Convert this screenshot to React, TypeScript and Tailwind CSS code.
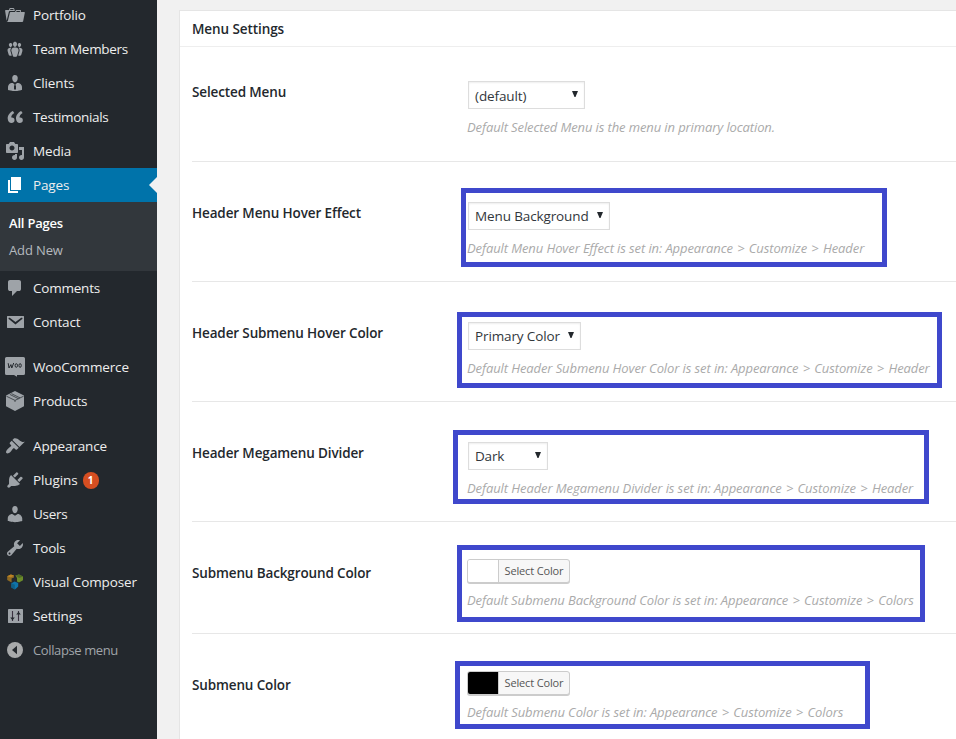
import { Fragment, type ReactNode } from "react";

const glyphs = {
  portfolio:
    "M4 5H.78c-.37 0-.74.32-.69.84l1.56 9.99S3.5 8.47 3.86 6.7c.11-.53.61-.7.98-.7H10s-.7-2.08-.77-2.31C9.11 3.25 8.89 3 8.45 3H5.14c-.36 0-.7.23-.8.64C4.25 4.04 4 5 4 5zm4.88 0h-4s.42-1 .87-1h2.13c.48 0 1 1 1 1zM2.67 16.25c-.31.47-.76.75-1.26.75h15.73c.54 0 .92-.31 1.03-.83.44-2.19 1.68-8.44 1.68-8.44.07-.5-.3-.73-.62-.73H16V5.53c0-.16-.26-.53-.66-.53h-3.76c-.52 0-.87.58-.87.58L10 7H5.59c-.32 0-.63.19-.69.5 0 0-1.59 6.7-1.72 7.33-.07.37-.22.99-.51 1.42zM15.38 7H11s.58-1 1.13-1h2.29c.71 0 .96 1 .96 1z",
  groups:
    "M8.03 4.46c-.29 1.28.55 3.46 1.97 3.46 1.41 0 2.25-2.18 1.96-3.46-.22-.98-1.08-1.63-1.96-1.63-.89 0-1.74.65-1.97 1.63zm-4.13.9c-.25 1.08.47 2.93 1.67 2.93s1.92-1.85 1.67-2.93c-.19-.83-.92-1.39-1.67-1.39s-1.48.56-1.67 1.39zm8.86 0c-.25 1.08.47 2.93 1.66 2.93 1.2 0 1.92-1.85 1.67-2.93-.19-.83-.92-1.39-1.67-1.39-.74 0-1.47.56-1.66 1.39zm-.59 11.43l1.25-4.3C14.2 10 12.71 8.47 10 8.47c-2.72 0-4.21 1.53-3.44 4.02l1.26 4.3C8.05 17.51 9 18 10 18c.98 0 1.94-.49 2.17-1.21zm-6.1-7.63c-.49.67-.96 1.83-.42 3.59l1.12 3.79c-.34.2-.77.31-1.2.31-.85 0-1.65-.41-1.85-1.03l-1.07-3.65c-.65-2.11.61-3.4 2.92-3.4.27 0 .54.02.79.06-.1.1-.2.22-.29.33zm8.35-.39c2.31 0 3.58 1.29 2.92 3.4l-1.07 3.65c-.2.62-1 1.03-1.85 1.03-.43 0-.86-.11-1.2-.31l1.11-3.77c.55-1.78.08-2.94-.42-3.61-.08-.11-.18-.23-.28-.33.25-.04.51-.06.79-.06z",
  businessman:
    "M7.3 6l-.03-.19c-.04-.37-.05-.73-.03-1.08.02-.36.1-.71.25-1.04.14-.32.31-.61.52-.86s.49-.46.83-.6c.34-.15.72-.23 1.13-.23.69 0 1.26.2 1.71.59s.76.87.91 1.44.18 1.16.09 1.78l-.03.19c-.01.09-.05.25-.11.48-.05.24-.12.47-.2.69-.08.21-.19.45-.34.72-.14.27-.3.49-.47.69-.18.19-.4.34-.67.48-.27.13-.55.19-.86.19s-.59-.06-.87-.19c-.26-.13-.49-.29-.67-.5-.18-.2-.34-.42-.49-.66-.15-.25-.26-.49-.34-.73-.09-.25-.16-.47-.21-.67-.06-.21-.1-.37-.12-.5zm9.2 6.24c.41.7.5 1.41.5 2.14v2.49c0 .03-.12.08-.29.13-.18.04-.42.13-.97.27-.55.12-1.1.24-1.65.34s-1.19.19-1.95.27c-.75.08-1.46.12-2.13.12-.68 0-1.39-.04-2.14-.12-.75-.07-1.4-.17-1.98-.27-.58-.11-1.08-.23-1.56-.34-.49-.11-.8-.21-1.06-.29L3 16.87v-2.49c0-.75.07-1.46.46-2.15s.81-1.25 1.5-1.68C5.66 10.12 7.19 10 8 10l1.67 1.67L9 13v3l1.02 1.08L11 16v-3l-.68-1.33L11.97 10c.77 0 2.2.07 2.9.52.71.45 1.21 1.02 1.63 1.72z",
  media:
    "M13 11V4c0-.55-.45-1-1-1h-1.67L9 1H5L3.67 3H2c-.55 0-1 .45-1 1v7c0 .55.45 1 1 1h10c.55 0 1-.45 1-1zM7 4.5c1.38 0 2.5 1.12 2.5 2.5S8.38 9.5 7 9.5 4.5 8.38 4.5 7 5.62 4.5 7 4.5zM14 6h5v10.5c0 1.38-1.12 2.5-2.5 2.5S14 17.88 14 16.5s1.12-2.5 2.5-2.5c.17 0 .34.02.5.05V9h-3V6zm-4 8.05V13h2v3.5c0 1.38-1.12 2.5-2.5 2.5S7 17.88 7 16.5 8.12 14 9.5 14c.17 0 .34.02.5.05z",
  page: "M6 15V2h10v13H6zm-1 1h8v2H3V5h2v11z",
  comments:
    "M5 2h9q.82 0 1.41.59T16 4v7q0 .82-.59 1.41T14 13h-2l-5 5v-5H5q-.82 0-1.41-.59T3 11V4q0-.82.59-1.41T5 2z",
  email:
    "M2.4 4h16.2q.4 0 .4.4v11.2q0 .4-.4.4H2.4q-.4 0-.4-.4V4.4Q2 4 2.4 4zm8.09 8.6l6.74-5.53c.24-.2.43-.66.13-1.07-.29-.41-.82-.42-1.17-.17l-5.7 4.2L4.8 5.83c-.35-.25-.88-.24-1.17.17-.3.41-.11.87.13 1.07z",
  appearance:
    "M14.48 11.06L7.41 3.99l1.5-1.5c.5-.56 2.3-.47 3.51.32 1.21.8 1.43 1.28 2.91 2.1 1.18.64 2.45 1.26 4.45.85zm-.71.71L6.7 4.7 4.93 6.47c-.39.39-.39 1.02 0 1.41l1.06 1.06c.39.39.39 1.03 0 1.42-.6.6-1.43 1.11-2.21 1.69-.35.26-.7.53-1.01.84C1.43 14.23.4 16.08 1.4 17.07c.99 1 2.84-.03 4.18-1.36.31-.31.58-.66.85-1.02.57-.78 1.08-1.61 1.69-2.21.39-.39 1.02-.39 1.41 0l1.06 1.06c.39.39 1.02.39 1.41 0z",
  plugins:
    "M13.11 4.36L9.87 7.6 8 5.73l3.24-3.24c.35-.34 1.05-.2 1.56.32.52.51.66 1.21.31 1.55zm-8 1.77l.91-1.12 9.01 9.01-1.19.84c-.71.71-2.63 1.16-3.82 1.16H6.14L4.9 17.26c-.59.59-1.54.59-2.12 0-.59-.58-.59-1.53 0-2.12l1.24-1.24v-3.88c0-1.13.4-3.19 1.09-3.89zm7.26 3.97l3.24-3.24c.34-.35 1.04-.21 1.55.31.52.51.66 1.21.31 1.55l-3.24 3.25z",
  users:
    "M10 9.25c-2.27 0-2.73-3.44-2.73-3.44C7 4.02 7.82 2 9.97 2c2.16 0 2.98 2.02 2.71 3.81 0 0-.41 3.44-2.68 3.44zm0 2.57L12.72 10c2.39 0 4.52 2.33 4.52 4.53v2.49s-3.65 1.13-7.24 1.13c-3.65 0-7.24-1.13-7.24-1.13v-2.49c0-2.25 1.94-4.48 4.47-4.48z",
  tools:
    "M16.68 9.77c-1.34 1.34-3.3 1.67-4.95.99l-5.41 6.52c-.99.99-2.59.99-3.58 0s-.99-2.59 0-3.57l6.52-5.42c-.68-1.65-.35-3.61.99-4.95 1.28-1.28 3.12-1.62 4.72-1.06l-2.89 2.89 2.82 2.82 2.86-2.87c.53 1.58.18 3.39-1.08 4.65zM3.81 16.21c.4.39 1.04.39 1.43 0 .4-.4.4-1.04 0-1.43-.39-.4-1.03-.4-1.43 0-.39.39-.39 1.03 0 1.43z",
};

function Glyph({ name }: { name: keyof typeof glyphs }) {
  return (
    <svg viewBox="0 0 20 20" className="size-5 fill-current">
      <path fillRule="evenodd" d={glyphs[name]} />
    </svg>
  );
}

function QuoteIcon() {
  return (
    <svg viewBox="0 0 20 20" className="size-5 fill-current">
      <path
        transform="translate(2 2.3) scale(.88 .86)"
        d="M8.54 12.74c0-.87-.24-1.61-.72-2.22-.73-.92-2.14-1.03-2.96-.85-.34-1.93 1.3-4.39 3.42-5.45L6.65 1.94C3.45 3.46.31 6.96.85 11.37 1.19 14.16 2.8 16 5.08 16c1 0 1.83-.29 2.48-.88.66-.59.98-1.38.98-2.38zm9.43 0c0-.87-.24-1.61-.72-2.22-.73-.92-2.14-1.03-2.96-.85-.34-1.93 1.3-4.39 3.42-5.45l-1.63-2.28c-3.2 1.52-6.34 5.02-5.8 9.43.34 2.79 1.95 4.63 4.23 4.63 1 0 1.83-.29 2.48-.88.66-.59.98-1.38.98-2.38z"
      />
    </svg>
  );
}

function WooIcon() {
  return (
    <svg viewBox="0 0 20 20" className="size-5">
      <path
        className="fill-current"
        d="M1.5 0h17A1.5 1.5 0 0 1 20 1.5v15a1.5 1.5 0 0 1-1.5 1.5H12v1.8L9 18H1.5A1.5 1.5 0 0 1 0 16.500v-15A1.5 1.5 0 0 1 1.5 0z"
      />
      <g fill="none" stroke="#23282d" strokeWidth="1" strokeLinejoin="round">
        <path d="M3.2 6.2l.8 4.8 1.9-3.4.9 3.4 1.9-5" />
        <ellipse cx="11.3" cy="8.5" rx="1.2" ry="1.8" />
        <ellipse cx="15.1" cy="8.5" rx="1.2" ry="1.8" />
      </g>
    </svg>
  );
}

function ProductsIcon() {
  return (
    <svg viewBox="0 0 20 20" className="size-5">
      <path className="fill-current" d="M10 0l9 4.6v10.6L10 20l-9-4.8V4.600z" />
      <path
        d="M1.4 5.2L10 9.4l8.600-4.200M10 9.400v1.600M4.800 3.400L13.400 7.700M6.400 2.600L15 6.900"
        fill="none"
        stroke="#23282d"
        strokeWidth=".7"
      />
    </svg>
  );
}

function ComposerIcon() {
  return (
    <svg viewBox="0 0 20 20" className="size-5">
      <path d="M2.200 4.200L5.800 2.400 9 3.600 9 5.400 6.600 6.400v4.200L2.200 8z" fill="#8f6a23" />
      <path d="M2.200 4.200L5.800 2.400 9 3.600 6 5.400z" fill="#bd8424" />
      <path d="M10.400 3.600L14 2.400l4 2v3.800L14 10.600l-2-1.200V6z" fill="#6c8c2b" />
      <path d="M10.400 3.600L14 2.400l4 2L14.200 6z" fill="#4f6b26" />
      <path d="M6.400 11.200L9.600 9.400l3.600 1.600v3.400L10 17.600l-3.600-2.200z" fill="#0f74a8" />
      <path d="M6.400 11.200l3.400 1.600v4.800l-3.400-2.200z" fill="#0f5f86" />
    </svg>
  );
}

function SettingsIcon() {
  return (
    <svg viewBox="0 0 20 20" className="size-5">
      <rect className="fill-current" x="3" y="3" width="15" height="14" rx=".4" />
      <path d="M7.500 5v10M13.500 5v10" stroke="#3a3140" strokeWidth="1.100" />
      <path d="M5.200 11.500h4.600L7.500 14.200zM11.200 8.600h4.600L13.500 5.800z" fill="#23282d" />
    </svg>
  );
}

function CollapseIcon() {
  return (
    <svg viewBox="0 0 20 20" className="size-5">
      <circle className="fill-current" cx="10" cy="10" r="8" />
      <path d="M12 5.800v8.400L7 10z" fill="#23282d" />
    </svg>
  );
}

function MenuItem({
  icon,
  label,
  tracking = "tracking-[-0.16px]",
  active = false,
  badge,
}: {
  icon: ReactNode;
  label: string;
  tracking?: string;
  active?: boolean;
  badge?: string;
}) {
  return (
    <li
      className={
        active
          ? "relative flex h-[34px] items-center bg-[#0073aa] pl-[5px] text-white"
          : "flex h-[34px] items-center pl-[5px] text-[#9ea3a8]"
      }
    >
      {icon}
      <span className={`ml-2 text-[13.5px] leading-[18px] text-[#eee] ${tracking}`}>{label}</span>
      {badge && (
        <span className="ml-[5px] flex h-[17px] w-4 items-center justify-center rounded-full bg-[#d54e21] text-[10px] font-bold text-white">
          {badge}
        </span>
      )}
      {active && (
        <span className="absolute top-[9px] right-0 border-y-8 border-r-8 border-y-transparent border-r-[#f1f1f1]" />
      )}
    </li>
  );
}

function Sidebar() {
  return (
    <nav className="w-[157px] shrink-0 bg-[#23282d]">
      <ul className="-mt-0.5">
        <MenuItem icon={<Glyph name="portfolio" />} label="Portfolio" />
        <MenuItem icon={<Glyph name="groups" />} label="Team Members" tracking="tracking-[-0.3px]" />
        <MenuItem icon={<Glyph name="businessman" />} label="Clients" />
        <MenuItem icon={<QuoteIcon />} label="Testimonials" tracking="tracking-[-0.32px]" />
        <MenuItem icon={<Glyph name="media" />} label="Media" />
        <MenuItem icon={<Glyph name="page" />} label="Pages" active />
        <li className="h-[69px] bg-[#32373c] pt-2 pl-[9px] text-[13px]">
          <ul>
            <li className="h-[27px] leading-[27px] font-semibold tracking-[-0.2px] text-white">All Pages</li>
            <li className="h-[27px] leading-[27px] tracking-[-0.12px] text-[#b4b9be]">Add New</li>
          </ul>
        </li>
        <MenuItem icon={<Glyph name="comments" />} label="Comments" tracking="tracking-[-0.22px]" />
        <MenuItem icon={<Glyph name="email" />} label="Contact" />
      </ul>
      <ul className="mt-[11px]">
        <MenuItem icon={<WooIcon />} label="WooCommerce" tracking="tracking-[-0.15px]" />
        <MenuItem icon={<ProductsIcon />} label="Products" tracking="tracking-[-0.22px]" />
      </ul>
      <ul className="mt-[11px]">
        <MenuItem icon={<Glyph name="appearance" />} label="Appearance" />
        <MenuItem icon={<Glyph name="plugins" />} label="Plugins" tracking="tracking-[-0.1px]" badge="1" />
        <MenuItem icon={<Glyph name="users" />} label="Users" tracking="tracking-[-0.28px]" />
        <MenuItem icon={<Glyph name="tools" />} label="Tools" tracking="tracking-[-0.2px]" />
        <MenuItem icon={<ComposerIcon />} label="Visual Composer" tracking="tracking-[-0.12px]" />
        <MenuItem icon={<SettingsIcon />} label="Settings" tracking="tracking-[-0.1px]" />
        <li className="flex h-[34px] items-center pl-[5px] text-[#a8aaab]">
          <CollapseIcon />
          <span className="mt-px ml-2 text-[13px] tracking-[-0.38px] text-[#a0a5aa]">Collapse menu</span>
        </li>
      </ul>
    </nav>
  );
}

function Select({ value, width, tracking = "" }: { value: string; width: string; tracking?: string }) {
  return (
    <div
      className={`ml-px flex h-7 items-center justify-between border border-[#ddd] bg-white px-1.5 text-[#32373c] shadow-[inset_0_1px_2px_rgba(0,0,0,0.07)] ${width}`}
    >
      <span className={`text-[13.5px] leading-[18px] ${tracking}`}>{value}</span>
      <svg viewBox="0 0 6 6" className="mb-0.5 h-1.5 w-1.5 fill-[#23282d]">
        <path d="M0 0h6L3.500 6h-1z" />
      </svg>
    </div>
  );
}

function ColorButton({ swatch }: { swatch: string }) {
  return (
    <div className="flex h-6 w-[103px] overflow-hidden rounded-[3px] border border-[#ccc] bg-[#f7f7f7] shadow-[0_1px_0_#ccc]">
      <span className={`w-[30px] ${swatch}`} />
      <span className="flex-1 border-l border-[#ccc] text-center text-[11px] leading-[22px] tracking-[-0.15px] text-[#555]">
        Select Color
      </span>
    </div>
  );
}

function Row({
  label,
  height,
  labelTop = "pt-[41px]",
  controlTop,
  hint,
  hintClass,
  highlight,
  children,
}: {
  label: string;
  height: string;
  labelTop?: string;
  controlTop: string;
  hint: string[];
  hintClass: string;
  highlight?: string;
  children: ReactNode;
}) {
  return (
    <section className={`relative flex border-b border-[#e7e7e7] ${height}`}>
      <h3
        className={`w-[275px] shrink-0 text-[13.5px] leading-[21px] font-semibold tracking-[-0.13px] text-[#23282d] ${labelTop}`}
      >
        {label}
      </h3>
      <div className={controlTop}>
        {children}
        <p className={`text-[13px] leading-5 whitespace-nowrap text-[#aaa] italic ${hintClass}`}>
          {hint.map((part, i) => (
            <Fragment key={part}>
              {i > 0 && <span className="mx-px"> &gt; </span>}
              {part}
            </Fragment>
          ))}
        </p>
      </div>
      {highlight && <span className={`absolute border-[5px] border-[#3f48cc] ${highlight}`} />}
    </section>
  );
}

export default function App() {
  return (
    <div className="flex h-[739px] w-[956px] overflow-hidden bg-[#f1f1f1] font-['Open_Sans','Noto_Sans',sans-serif]">
      <Sidebar />
      <main className="flex-1 pt-2.5 pl-[22px]">
        <div className="h-[740px] w-[790px] border border-[#e5e5e5] bg-white">
          <h2 className="h-9 border-b border-[#eee] pl-3 text-[13.5px] leading-[37px] font-semibold tracking-[-0.08px] text-[#23282d]">
            Menu Settings
          </h2>
          <div className="pl-3">
            <Row
              label="Selected Menu"
              height="h-[115px]"
              labelTop="pt-[35px]"
              controlTop="pt-[34px]"
              hint={["Default Selected Menu is the menu in primary location."]}
              hintClass="mt-2 tracking-[-0.11px]"
            >
              <Select value="(default)" width="w-[117px]" tracking="pt-px tracking-[-0.1px]" />
            </Row>
            <Row
              label="Header Menu Hover Effect"
              height="h-[120px]"
              controlTop="pt-[40px]"
              hint={["Default Menu Hover Effect is set in: Appearance", "Customize", "Header"]}
              hintClass="mt-2 tracking-[-0.1px]"
              highlight="top-[26px] left-[269px] h-[79px] w-[426px]"
            >
              <Select value="Menu Background" width="w-[142px]" tracking="tracking-[-0.12px]" />
            </Row>
            <Row
              label="Header Submenu Hover Color"
              height="h-[120px]"
              controlTop="pt-[40px]"
              hint={["Default Header Submenu Hover Color is set in: Appearance", "Customize", "Header"]}
              hintClass="mt-2 tracking-[-0.1px]"
              highlight="top-[30px] left-[265px] h-[76px] w-[485px]"
            >
              <Select value="Primary Color" width="w-[113px]" tracking="tracking-[-0.12px]" />
            </Row>
            <Row
              label="Header Megamenu Divider"
              height="h-[120px]"
              controlTop="pt-[40px]"
              hint={["Default Header Megamenu Divider is set in: Appearance", "Customize", "Header"]}
              hintClass="mt-2 tracking-[-0.09px]"
              highlight="top-[28px] left-[261px] h-[74px] w-[476px]"
            >
              <Select value="Dark" width="w-[80px]" tracking="tracking-[-0.2px]" />
            </Row>
            <Row
              label="Submenu Background Color"
              height="h-[112px]"
              controlTop="pt-[37px]"
              hint={["Default Submenu Background Color is set in: Appearance", "Customize", "Colors"]}
              hintClass="mt-[7px] tracking-[-0.11px]"
              highlight="top-[23px] left-[265px] h-[77px] w-[468px]"
            >
              <ColorButton swatch="bg-white" />
            </Row>
            <Row
              label="Submenu Color"
              height="h-[112px]"
              controlTop="pt-[37px]"
              hint={["Default Submenu Color is set in: Appearance", "Customize", "Colors"]}
              hintClass="mt-[7px] tracking-[-0.1px]"
              highlight="top-[27px] left-[263px] h-[68px] w-[415px]"
            >
              <ColorButton swatch="bg-black" />
            </Row>
          </div>
        </div>
      </main>
    </div>
  );
}
